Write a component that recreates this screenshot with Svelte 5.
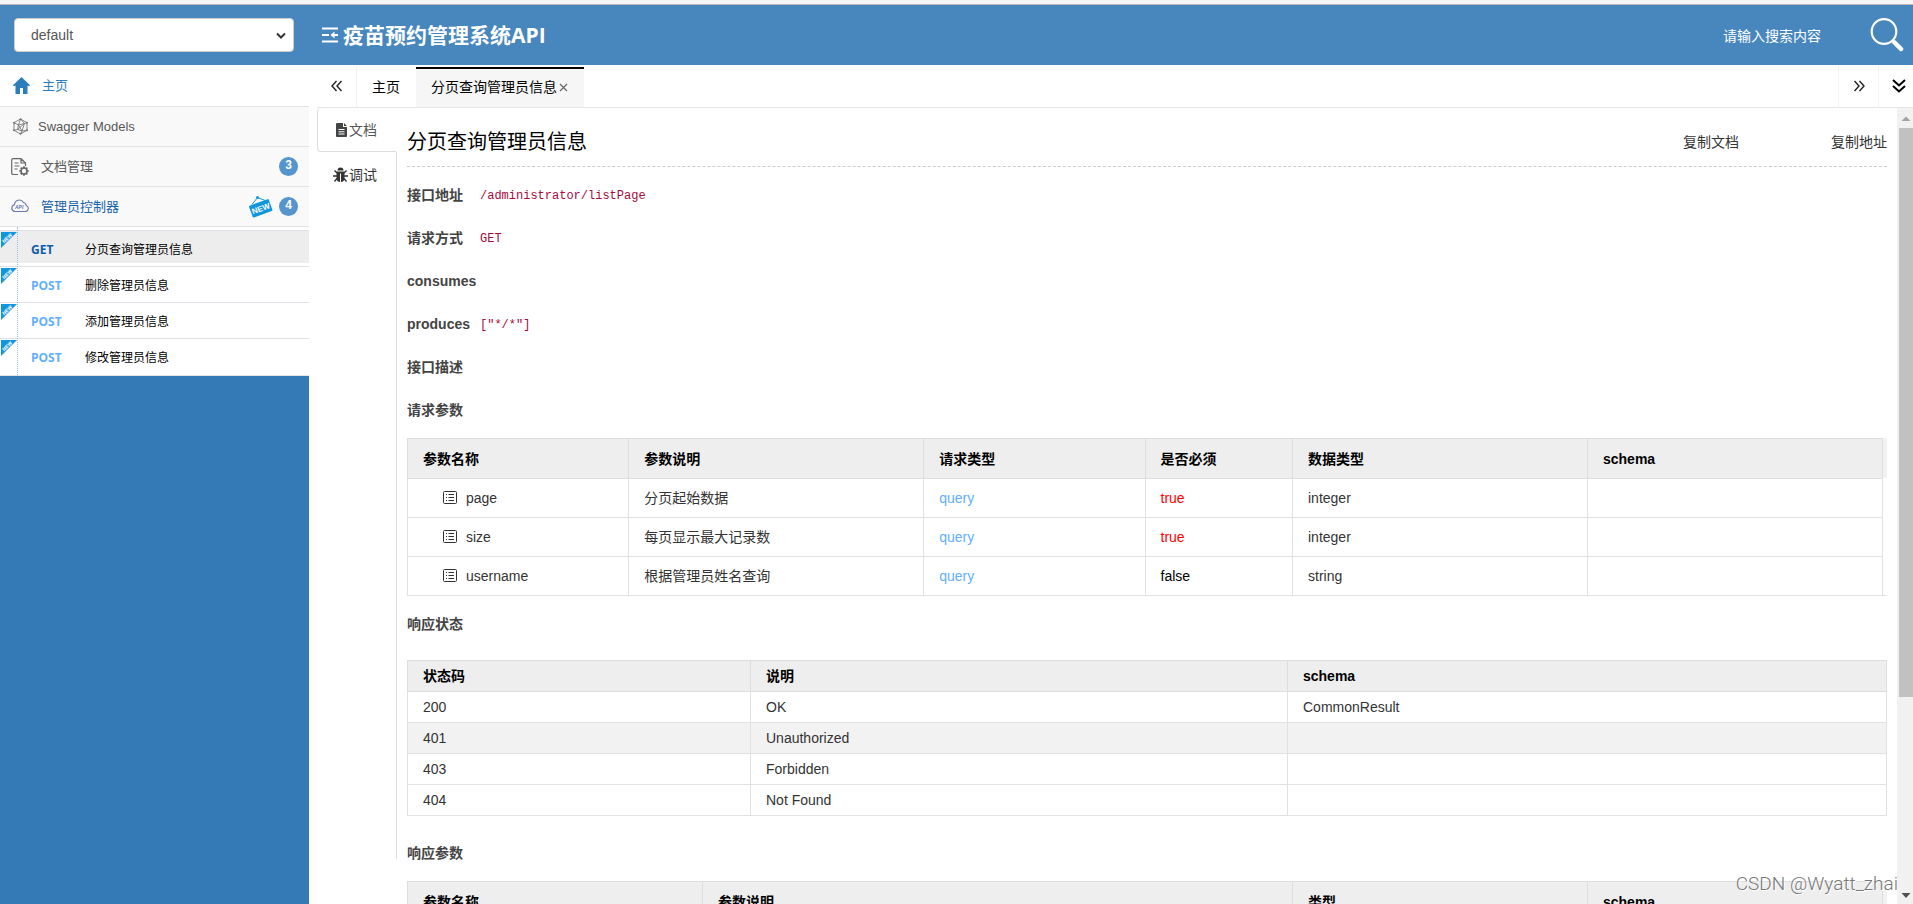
<script lang="ts">
  type Api = { method: string; name: string };
  type Param = { name: string; desc: string; place: string; required: boolean; type: string };

  let group = 'default';
  let keyword = '';
  let activeApi = 0;

  const apis: Api[] = [
    { method: 'GET', name: '分页查询管理员信息' },
    { method: 'POST', name: '删除管理员信息' },
    { method: 'POST', name: '添加管理员信息' },
    { method: 'POST', name: '修改管理员信息' }
  ];

  const fields = [
    { label: '接口地址', value: '/administrator/listPage' },
    { label: '请求方式', value: 'GET' },
    { label: 'consumes', value: '' },
    { label: 'produces', value: '["*/*"]' },
    { label: '接口描述', value: '' },
    { label: '请求参数', value: '' }
  ];

  const params: Param[] = [
    { name: 'page', desc: '分页起始数据', place: 'query', required: true, type: 'integer' },
    { name: 'size', desc: '每页显示最大记录数', place: 'query', required: true, type: 'integer' },
    { name: 'username', desc: '根据管理员姓名查询', place: 'query', required: false, type: 'string' }
  ];

  const statuses = [
    { code: 200, text: 'OK', schema: 'CommonResult' },
    { code: 401, text: 'Unauthorized', schema: '' },
    { code: 403, text: 'Forbidden', schema: '' },
    { code: 404, text: 'Not Found', schema: '' }
  ];
</script>

<div class="app">
  <header class="header">
    <div class="group">
      <select class="group-select" aria-label="分组" bind:value={group}>
        <option value="default">default</option>
      </select>
      <svg class="group-arrow" width="10" height="8" viewBox="0 0 10 8" fill="none" stroke="#333" stroke-width="2">
        <path d="M1 1.5l4 4 4-4" />
      </svg>
    </div>
    <h1 class="title">
      <svg width="18" height="16" viewBox="0 0 18 16" fill="none" stroke="#fff" stroke-width="2">
        <path d="M1 1.500h16M1 8h7M1 14.500h16" />
        <path d="M9.500 8l4-3.500v7z" fill="#fff" stroke="none" />
        <path d="M12 8h5" />
      </svg>
      疫苗预约管理系统API
    </h1>
    <form class="search" on:submit|preventDefault>
      <input class="search-input" type="text" aria-label="搜索" placeholder="请输入搜索内容" bind:value={keyword} />
      <button class="search-button" aria-label="搜索">
        <svg width="34" height="34" viewBox="0 0 34 34" fill="none" stroke="#fff">
          <circle cx="14" cy="13.5" r="12.3" stroke-width="2.2" />
          <path d="M22.5 22.5l2 2" stroke-width="2.5" />
          <path d="M24.5 24.5l6.5 6.5" stroke-width="4.5" stroke-linecap="round" />
        </svg>
      </button>
    </form>
  </header>

  <div class="body">
    <aside class="sidebar">
      <nav>
        <a class="menu home" href="#home">
          <svg width="17" height="17" viewBox="0 0 17 17" fill="#2b7dbc">
            <path d="M8.5 0L17 8.2l-1 1L14.5 8.5V17H10v-6H7v6H2.5V8.5L1 9.2l-1-1z" />
          </svg>
          <span>主页</span>
        </a>
        <a class="menu models" href="#models">
          <svg width="17" height="17" viewBox="0 0 17 17" fill="none" stroke="#777" stroke-width="0.900">
            <path d="M8.500 1l6.500 3.700v7.600L8.500 16 2 12.300V4.700z" />
            <path d="M2 4.700l4.500 2.300 6-1.500L15 4.700M6.500 7l-1 4.500 4.500 1.500 2.500-7.500M8.500 1L6.500 7l3.500 6 5-.7M2 12.300l3.500-.8M8.500 1l4 4.500M10 13l-1.500 3M5.500 11.500l7-6" />
            <g fill="#777" stroke="none">
              <circle cx="8.500" cy="1.300" r="1" /><circle cx="15" cy="4.700" r="1" /><circle cx="15" cy="12.300" r="1" />
              <circle cx="8.500" cy="15.700" r="1" /><circle cx="2" cy="12.300" r="1" /><circle cx="2" cy="4.700" r="1" />
            </g>
          </svg>
          <span>Swagger Models</span>
        </a>
        <a class="menu" href="#docs">
          <svg width="18" height="18" viewBox="0 0 18 18" fill="none" stroke="#666" stroke-width="1.200">
            <path d="M7 16.500H2.500Q.7 16.500.7 15V2Q.7.700 2 .700h8L14.500 5v3M10 .700V5h4.500M3.500 5h4M3.500 8h5M3.500 11h3" />
            <circle cx="13" cy="13" r="3" stroke-width="1.600" />
            <path d="M13 8.300v1.700M13 16v1.700M8.300 13H10M16 13h1.700M9.700 9.700l1.200 1.200M15.100 15.100l1.200 1.200M9.700 16.300l1.200-1.200M15.100 10.900l1.200-1.200" stroke-width="1.700" />
          </svg>
          <span class="menu-text">文档管理</span>
          <span class="badge">3</span>
        </a>
        <a class="menu current" href="#administrator">
          <svg width="18" height="18" viewBox="0 0 18 18" fill="none" stroke="#6677a8">
            <path d="M4 13.500a3.400 3.400 0 0 1-.500-6.700A4.800 4.800 0 0 1 12.500 4.500a3.300 3.300 0 0 1 2.700 3A3.100 3.100 0 0 1 14.500 13.500z" stroke-width="1.100" />
            <text x="4" y="11" class="cloud-text">API</text>
          </svg>
          <span class="menu-text">管理员控制器</span>
          <svg class="new-sign" width="24" height="24" viewBox="0 0 24 24">
            <path d="M3 9.500L8.500 2.500l9 3.500" fill="none" stroke="#1296db" />
            <circle cx="8.500" cy="2.500" r="1.500" fill="#1296db" />
            <g transform="rotate(-20 12 14)">
              <rect x="1.500" y="7" width="21" height="12.500" rx="1" fill="#1296db" />
              <text x="12" y="16.300" text-anchor="middle" class="sign-text">NEW</text>
            </g>
          </svg>
          <span class="badge">4</span>
        </a>
      </nav>

      <ul class="apis">
        {#each apis as api, i}
          <li>
            <a href="#api-{i}" class="api" class:active={i === activeApi} on:click={() => (activeApi = i)}>
              <svg class="ribbon" width="16" height="16" viewBox="0 0 16 16">
                <path d="M0 0h16L0 16z" fill="#1296db" />
                <text x="6" y="8" text-anchor="middle" transform="rotate(-45 6 6)" class="ribbon-text">NEW</text>
              </svg>
              <span class="method {api.method.toLowerCase()}">{api.method}</span>
              <span>{api.name}</span>
            </a>
          </li>
        {/each}
      </ul>
    </aside>

    <main class="main">
      <div class="tabs">
        <button class="roll left" aria-label="向左滚动">
          <svg width="12" height="12" viewBox="0 0 12 12" fill="none" stroke="#222" stroke-width="1.400">
            <path d="M5.500 1L1 6l4.500 5M10.500 1L6 6l4.500 5" />
          </svg>
        </button>
        <button class="tab">主页</button>
        <button class="tab active">
          分页查询管理员信息
          <svg width="9" height="9" viewBox="0 0 9 9" fill="none" stroke="#666" stroke-width="1.200">
            <path d="M1 1l7 7M8 1L1 8" />
          </svg>
        </button>
        <span class="spacer"></span>
        <button class="roll" aria-label="向右滚动">
          <svg width="12" height="12" viewBox="0 0 12 12" fill="none" stroke="#222" stroke-width="1.400">
            <path d="M1.500 1L6 6l-4.500 5M6.500 1L11 6l-4.500 5" />
          </svg>
        </button>
        <button class="roll more" aria-label="页签操作">
          <svg width="14" height="14" viewBox="0 0 14 14" fill="none" stroke="#000" stroke-width="2">
            <path d="M1 1l6 5.500L13 1M1 7l6 5.500L13 7" />
          </svg>
        </button>
      </div>

      <div class="panel">
        <div class="modes">
          <button class="mode active">
            <svg width="11" height="14" viewBox="0 0 11 14">
              <path d="M1 0h6v4h4v9a1 1 0 0 1-1 1H1a1 1 0 0 1-1-1V1a1 1 0 0 1 1-1zM8 0l3 3H8z" fill="#444" />
              <path d="M2.500 6.500h6M2.500 8.800h6M2.500 11h6" stroke="#fff" />
            </svg>
            文档
          </button>
          <button class="mode">
            <svg width="15" height="16" viewBox="0 0 15 16">
              <path d="M4.500 3.500a3 3 0 0 1 6 0z" fill="#333" />
              <path d="M3.500 4.500h8V11c0 2.500-1.500 4-3.500 4V6.500H7V15c-2 0-3.500-1.500-3.500-4z" fill="#333" />
              <path d="M4 6L1.500 3.500M11 6l2.500-2.500M4 9H0M11 9h4M4 11.500L1.500 14.500M11 11.500l2.500 3" stroke="#333" stroke-width="1.400" />
            </svg>
            调试
          </button>
        </div>

        <div class="doc">
          <div class="doc-head">
            <h2>分页查询管理员信息</h2>
            <button class="copy">复制文档</button>
            <button class="copy">复制地址</button>
          </div>

          <dl class="fields">
            {#each fields as field}
              <div class="field">
                <dt>{field.label}</dt>
                <dd>{field.value}</dd>
              </div>
            {/each}
          </dl>

          <div class="tree">
            <table>
              <colgroup>
                <col class="w15" /><col class="w20" /><col class="w15" /><col class="w10" /><col class="w20" /><col class="w20" />
              </colgroup>
              <thead>
                <tr><th>参数名称</th><th>参数说明</th><th>请求类型</th><th>是否必须</th><th>数据类型</th><th>schema</th></tr>
              </thead>
              <tbody>
                {#each params as param}
                  <tr>
                    <td>
                      <span class="node">
                        <svg width="14" height="14" viewBox="0 0 14 14" fill="none" stroke="#333">
                          <rect x="0.500" y="0.500" width="13" height="12" rx="1" />
                          <path d="M3 3.500h1M5.500 3.500h5.500M3 6.500h1M5.500 6.500h5.500M3 9.500h1M5.500 9.500h5.500" />
                        </svg>
                        {param.name}
                      </span>
                    </td>
                    <td>{param.desc}</td>
                    <td class="query">{param.place}</td>
                    <td class:required={param.required} class:optional={!param.required}>{param.required}</td>
                    <td>{param.type}</td>
                    <td></td>
                  </tr>
                {/each}
              </tbody>
            </table>
          </div>

          <h3 class="caption">响应状态</h3>
          <table class="status">
            <colgroup>
              <col class="code" /><col class="text" /><col />
            </colgroup>
            <thead>
              <tr><th>状态码</th><th>说明</th><th>schema</th></tr>
            </thead>
            <tbody>
              {#each statuses as status}
                <tr class:hover={status.code === 401}>
                  <td>{status.code}</td>
                  <td>{status.text}</td>
                  <td>{status.schema}</td>
                </tr>
              {/each}
            </tbody>
          </table>

          <h3 class="caption response">响应参数</h3>
          <div class="tree">
            <table>
              <colgroup>
                <col class="w20" /><col class="w40" /><col class="w20" /><col class="w20" />
              </colgroup>
              <thead>
                <tr><th>参数名称</th><th>参数说明</th><th>类型</th><th>schema</th></tr>
              </thead>
            </table>
          </div>
        </div>

        <div class="scrollbar" aria-hidden="true">
          <svg width="14" height="20" viewBox="0 0 14 20"><path d="M2.500 13L7 8.500l4.500 4.500z" fill="#a3a3a3" /></svg>
          <div class="thumb"></div>
          <div class="track"></div>
          <svg width="14" height="17" viewBox="0 0 14 17"><path d="M2.500 6L7 11l4.500-5z" fill="#505050" /></svg>
        </div>
      </div>
    </main>
  </div>

  <div class="watermark">CSDN @Wyatt_zhai</div>
</div>

<style>
  :global(body) {
    margin: 0;
    background: #fff;
  }

  .app {
    position: relative;
    display: flex;
    flex-direction: column;
    height: 100vh;
    overflow: hidden;
    box-sizing: border-box;
    border-top: 4px solid #f5f5f5;
    font-family: 'Liberation Sans', 'Noto Sans CJK SC', sans-serif;
    font-size: 14px;
    line-height: 20px;
    color: #333;
  }

  .app :global(*) {
    box-sizing: border-box;
  }

  svg {
    display: block;
    flex: none;
  }

  button {
    padding: 0;
    border: 0;
    background: none;
    font: inherit;
    color: inherit;
    cursor: pointer;
  }

  a {
    color: inherit;
    text-decoration: none;
  }

  h1,
  h2,
  h3,
  dl,
  dd,
  ul {
    margin: 0;
    padding: 0;
  }

  /* header */
  .header {
    display: flex;
    align-items: center;
    flex: none;
    height: 61px;
    padding: 0 9px 0 14px;
    border-top: 1px solid #bbb;
    background: #4787be;
    color: #fff;
  }

  .group {
    position: relative;
    width: 280px;
  }

  .group-select {
    display: block;
    width: 100%;
    height: 34px;
    padding: 0 16px;
    border: 1px solid #ccc;
    border-radius: 4px;
    appearance: none;
    background: #fff;
    font: inherit;
    color: #555;
  }

  .group-arrow {
    position: absolute;
    top: 14px;
    right: 8px;
    pointer-events: none;
  }

  .title {
    display: flex;
    align-items: center;
    gap: 4px;
    margin-left: 27px;
    font-family: 'Open Sans', 'Noto Sans CJK SC', sans-serif;
    font-size: 21px;
    font-weight: 700;
    white-space: nowrap;
  }

  .search {
    display: flex;
    align-items: center;
    margin-left: auto;
  }

  .search-input {
    width: 147px;
    padding: 2px 0 0;
    border: 0;
    outline: 0;
    background: none;
    font: inherit;
    color: #fff;
  }

  .search-input::placeholder {
    color: #fff;
    opacity: 1;
  }

  /* sidebar */
  .body {
    display: flex;
    flex: 1;
    min-height: 0;
  }

  .sidebar {
    flex: none;
    width: 309px;
    background: #337ab7;
  }

  .menu {
    display: flex;
    align-items: center;
    gap: 12px;
    height: 40px;
    padding: 0 11px;
    border-bottom: 1px solid #e4e4e4;
    background: #f9f9f9;
    font-size: 13px;
    color: #585858;
  }

  .menu.home {
    height: 42px;
    padding-left: 13px;
    background: #fff;
    color: #2b7dbc;
  }

  .menu.models {
    gap: 9px;
    padding-left: 12px;
  }

  .menu.current {
    color: #1963aa;
  }

  .menu-text {
    flex: 1;
  }

  .new-sign {
    margin-right: -6px;
  }

  .badge {
    width: 19px;
    height: 19px;
    border-radius: 10px;
    background: #5594cd;
    font-size: 12px;
    font-weight: 700;
    line-height: 17px;
    text-align: center;
    color: #fff;
  }

  .cloud-text {
    font-size: 5px;
    font-style: italic;
    font-weight: 700;
    fill: #6677a8;
    stroke: none;
  }

  .sign-text {
    font-size: 8px;
    font-weight: 700;
    fill: #fff;
  }

  .ribbon-text {
    font-size: 5px;
    font-weight: 700;
    fill: #fff;
  }

  .apis {
    position: relative;
    padding: 3px 0 1px;
    border-bottom: 1px solid #e4e4e4;
    background: #fff;
    list-style: none;
  }

  .apis::after {
    content: '';
    position: absolute;
    top: 0;
    bottom: 0;
    left: 17px;
    border-left: 1px dotted #9dbdd6;
  }

  .apis li {
    height: 36px;
    border-top: 1px solid #e0e0e8;
  }

  .api {
    position: relative;
    display: flex;
    align-items: center;
    height: 32px;
    padding: 6px 0 0 31px;
    font-size: 12px;
    color: #000;
  }

  .api.active {
    background: #ededed;
  }

  .ribbon {
    position: absolute;
    top: 1px;
    left: 1px;
  }

  .method {
    width: 54px;
    font-family: 'Open Sans', sans-serif;
    font-weight: 700;
  }

  .method.get {
    color: #0f5ca8;
  }

  .method.post {
    color: #61affe;
  }

  /* tabs */
  .main {
    display: flex;
    flex-direction: column;
    flex: 1;
    min-width: 0;
    padding-left: 8px;
  }

  .tabs {
    display: flex;
    flex: none;
    height: 43px;
    padding-top: 2px;
    border-bottom: 1px solid #e6e6e6;
    color: #000;
  }

  .roll {
    display: flex;
    align-items: center;
    justify-content: center;
    width: 40px;
    padding-bottom: 3px;
    border-left: 1px solid #f2f2f2;
  }

  .roll.left {
    border-right: 1px solid #f2f2f2;
    border-left: 0;
  }

  .roll.more {
    width: 35px;
    padding-left: 5px;
  }

  .tab {
    display: flex;
    align-items: center;
    gap: 2px;
    padding: 0 16px 2px 15px;
    border-top: 2px solid transparent;
  }

  .tab.active {
    border-top-color: #000;
    background: #f6f6f6;
  }

  .spacer {
    flex: 1;
  }

  .panel {
    display: flex;
    flex: 1;
    min-height: 0;
  }

  .modes {
    display: flex;
    flex-direction: column;
    flex: none;
    width: 80px;
    height: 751px;
  }

  .modes::after {
    content: '';
    flex: 1;
    border-right: 1px solid #ddd;
  }

  .mode {
    display: flex;
    align-items: center;
    justify-content: center;
    gap: 1px;
    height: 46px;
    padding-right: 3px;
    border-right: 1px solid #ddd;
  }

  .mode.active {
    gap: 2px;
    height: 44px;
    padding-right: 1px;
    border: 1px solid #ddd;
    border-top: 0;
    border-right-color: #fff;
    border-radius: 4px 0 0 4px;
    color: #555;
  }

  /* document */
  .doc {
    flex: 1;
    min-width: 0;
    padding: 10px 10px 0;
    overflow: hidden;
  }

  .doc-head {
    display: flex;
    align-items: center;
    height: 49px;
    border-bottom: 1px dashed #ccc;
  }

  .doc-head h2 {
    flex: 1;
    font-size: 20px;
    font-weight: 400;
    color: #000;
  }

  .copy {
    margin-left: 92px;
  }

  .fields {
    padding: 6px 0 7px;
  }

  .field {
    display: flex;
    align-items: center;
    height: 43px;
  }

  .field dt {
    min-width: 73px;
    font-weight: 700;
    color: #444;
  }

  .field dd {
    padding-top: 2px;
    font-family: 'Liberation Mono', monospace;
    font-size: 12px;
    color: #a6093d;
  }

  table {
    width: 100%;
    border-collapse: collapse;
    table-layout: fixed;
    background: #fff;
  }

  th,
  td {
    padding: 0 15px;
    border: 1px solid #e2e2e2;
    text-align: left;
  }

  th {
    border-color: #ddd;
    background: #eee;
    font-weight: 700;
    color: #000;
  }

  /* the header strip runs on behind the scroll gutter */
  .tree {
    padding-right: 4px;
    border-bottom: 1px solid #e2e2e2;
    background: linear-gradient(#f2f2f2 40px, #fff 40px);
  }

  .tree table {
    margin-bottom: -1px;
  }

  .tree th {
    height: 40px;
  }

  .tree td {
    height: 39px;
  }

  .w10 {
    width: 10%;
  }

  .w15 {
    width: 15%;
  }

  .w20 {
    width: 20%;
  }

  .w40 {
    width: 40%;
  }

  .node {
    display: flex;
    align-items: center;
    gap: 9px;
    padding-left: 20px;
  }

  .query {
    color: #61affe;
  }

  .required {
    color: #f00;
  }

  .optional {
    color: #000;
  }

  .caption {
    margin: 7px 0 14px;
    font-size: 14px;
    line-height: 43px;
    color: #444;
  }

  .caption.response {
    margin: 16px 0 6px;
  }

  .status th,
  .status td {
    height: 31px;
  }

  .status .code {
    width: 343px;
  }

  .status .text {
    width: 537px;
  }

  .status .hover td {
    background: #f2f2f2;
  }

  .scrollbar {
    display: flex;
    flex-direction: column;
    flex: none;
    width: 16px;
    padding-left: 2px;
    background: #f1f1f1;
  }

  .thumb {
    flex: 75;
    background: #c1c1c1;
  }

  .track {
    flex: 25;
  }

  .watermark {
    position: absolute;
    right: 15px;
    bottom: 9px;
    font-family: Roboto, sans-serif;
    font-size: 19px;
    font-weight: 300;
    line-height: 22px;
    color: #777;
    text-shadow: 1px 1px 0 #fff;
  }
</style>
